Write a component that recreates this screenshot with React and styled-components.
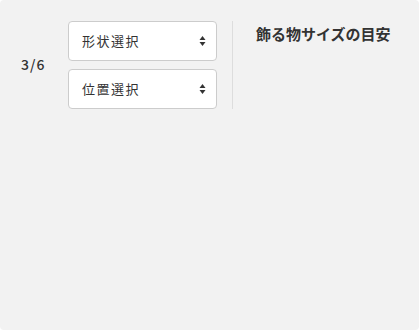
import React from "react";
import styled, { createGlobalStyle } from "styled-components";

const Global = createGlobalStyle`
  html, body { margin: 0; padding: 0; background: #ffffff; }
  body { font-family: "Noto Sans CJK JP", "Noto Sans", sans-serif; color: #333; }
`;

const Panel = styled.div`
  width: 419px;
  height: 330px;
  box-sizing: border-box;
  background: #f2f2f2;
  border-radius: 4px;
  padding: 21px 0 0 21px;
`;

const Row = styled.div`
  display: flex;
  align-items: stretch;
`;

const Step = styled.div`
  align-self: center;
  width: 47px;
  font-size: 14px;
  font-weight: 500;
  letter-spacing: 1px;
  color: #333;
  line-height: 20px;
  margin-top: -2px;
`;

const Selects = styled.div`
  display: flex;
  flex-direction: column;
  gap: 8px;
  width: 149px;
`;

const SelectBox = styled.div`
  height: 40px;
  box-sizing: border-box;
  background: #fff;
  border: 1px solid #cccccc;
  border-radius: 4px;
  display: flex;
  align-items: center;
  justify-content: space-between;
  padding: 0 10px 1px 13px;
  font-size: 13px;
  letter-spacing: 1.5px;
  color: #333;
`;

const Divider = styled.div`
  width: 1px;
  background: #dddddd;
  margin-left: 15px;
`;

const Side = styled.div`
  padding: 3px 0 0 23px;
`;

const Title = styled.h2`
  margin: 0;
  font-size: 15px;
  font-weight: 700;
  line-height: 20px;
  color: #333;
`;

const Arrows = () => (
  <svg width="7" height="12" viewBox="0 0 7 12">
    <path d="M3.5 1 L6.5 5 L0.5 5 Z" fill="#333" />
    <path d="M0.5 7 L6.5 7 L3.5 11 Z" fill="#333" />
  </svg>
);

const Select = ({ label }) => (
  <SelectBox>
    <span>{label}</span>
    <Arrows />
  </SelectBox>
);

export default function App() {
  return (
    <>
      <Global />
      <Panel>
        <Row>
          <Step>3/6</Step>
          <Selects>
            <Select label="形状選択" />
            <Select label="位置選択" />
          </Selects>
          <Divider />
          <Side>
            <Title>飾る物サイズの目安</Title>
          </Side>
        </Row>
      </Panel>
    </>
  );
}
